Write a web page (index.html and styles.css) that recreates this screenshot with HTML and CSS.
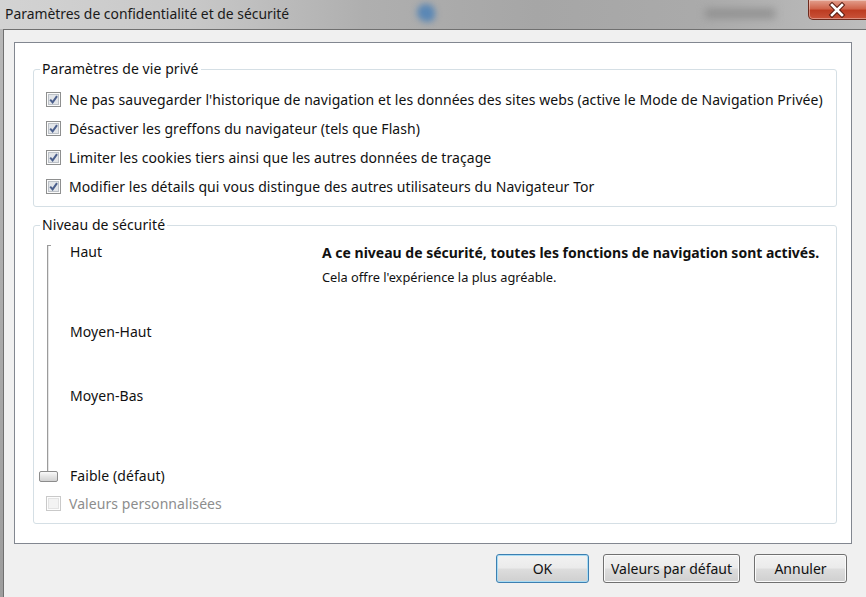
FILE: index.html
```html
<!DOCTYPE html>
<html lang="fr">
<head>
    <meta charset="UTF-8">
    <meta name="viewport" content="width=device-width, initial-scale=1.0">
    <title>Paramètres de confidentialité et de sécurité</title>
    <link rel="stylesheet" href="styles.css">
</head>
<body>
<div class="window">
    <!-- Aero title bar -->
    <div class="titlebar">
        <span class="title">Paramètres de confidentialité et de sécurité</span>
        <span class="glass-bird"></span>
        <span class="glass-text"></span>
        <button type="button" class="close" aria-label="Fermer">
            <svg width="22" height="16" viewBox="0 0 22 16">
                <path d="M6 3l10 10M16 3L6 13" stroke="#5b1d12" stroke-width="4.6" stroke-linecap="square" fill="none"/>
                <path d="M6 3l10 10M16 3L6 13" stroke="#fff" stroke-width="2.6" stroke-linecap="square" fill="none"/>
            </svg>
        </button>
    </div>

    <div class="frame">
        <div class="panel">
            <fieldset class="group privacy">
                <legend>Paramètres de vie privé</legend>
                <label class="check">
                    <svg class="box" viewBox="0 0 15 15"><rect x=".5" y=".5" width="14" height="14" fill="#fbfbfb" stroke="#8e8f8f"/><rect x="2.5" y="2.5" width="10" height="10" fill="#e2e5e9" stroke="#bcc1c7"/><path d="M4.2 7.6l2.4 2.8L11 4.2" stroke="#4b5f8c" stroke-width="2" fill="none"/></svg>
                    Ne pas sauvegarder l'historique de navigation et les données des sites webs (active le Mode de Navigation Privée)
                </label>
                <label class="check">
                    <svg class="box" viewBox="0 0 15 15"><rect x=".5" y=".5" width="14" height="14" fill="#fbfbfb" stroke="#8e8f8f"/><rect x="2.5" y="2.5" width="10" height="10" fill="#e2e5e9" stroke="#bcc1c7"/><path d="M4.2 7.6l2.4 2.8L11 4.2" stroke="#4b5f8c" stroke-width="2" fill="none"/></svg>
                    Désactiver les greffons du navigateur (tels que Flash)
                </label>
                <label class="check">
                    <svg class="box" viewBox="0 0 15 15"><rect x=".5" y=".5" width="14" height="14" fill="#fbfbfb" stroke="#8e8f8f"/><rect x="2.5" y="2.5" width="10" height="10" fill="#e2e5e9" stroke="#bcc1c7"/><path d="M4.2 7.6l2.4 2.8L11 4.2" stroke="#4b5f8c" stroke-width="2" fill="none"/></svg>
                    Limiter les cookies tiers ainsi que les autres données de traçage
                </label>
                <label class="check">
                    <svg class="box" viewBox="0 0 15 15"><rect x=".5" y=".5" width="14" height="14" fill="#fbfbfb" stroke="#8e8f8f"/><rect x="2.5" y="2.5" width="10" height="10" fill="#e2e5e9" stroke="#bcc1c7"/><path d="M4.2 7.6l2.4 2.8L11 4.2" stroke="#4b5f8c" stroke-width="2" fill="none"/></svg>
                    Modifier les détails qui vous distingue des autres utilisateurs du Navigateur Tor
                </label>
            </fieldset>

            <fieldset class="group security">
                <legend>Niveau de sécurité</legend>
                <div class="levels">
                    <div class="slider">
                        <div class="track">
                            <span class="thumb"></span>
                        </div>
                        <ul class="marks">
                            <li>Haut</li>
                            <li>Moyen-Haut</li>
                            <li>Moyen-Bas</li>
                            <li>Faible (défaut)</li>
                        </ul>
                    </div>
                    <div class="desc">
                        <p class="desc-title">A ce niveau de sécurité, toutes les fonctions de navigation sont activés.</p>
                        <p class="desc-text">Cela offre l'expérience la plus agréable.</p>
                    </div>
                </div>
                <label class="check disabled">
                    <svg class="box" viewBox="0 0 15 15"><rect x=".5" y=".5" width="14" height="14" fill="#fdfdfd" stroke="#c9c9c9"/><rect x="2.5" y="2.5" width="10" height="10" fill="#f3f3f3" stroke="#e3e3e3"/></svg>
                    Valeurs personnalisées
                </label>
            </fieldset>
        </div>

        <div class="buttons">
            <button type="button" class="btn default">OK</button>
            <button type="button" class="btn wide">Valeurs par défaut</button>
            <button type="button" class="btn">Annuler</button>
        </div>
    </div>
</div>
</body>
</html>
```

FILE: styles.css
```css
body {
    margin: 0;
    width: 866px;
    height: 597px;
    overflow: hidden;
    font-family: "Noto Sans", "Open Sans", sans-serif;
    font-size: 14px;
    color: #111;
}
.window {
    height: 597px;
    display: flex;
    flex-direction: column;
    background: linear-gradient(180deg, #b9b9b9, #9d9d9d);
}

/* title bar */
.titlebar {
    position: relative;
    height: 29px;
    flex-shrink: 0;
    background: linear-gradient(90deg, #d3d3d3 0%, #c8c8c8 22%, #afafaf 42%, #a6a6a6 62%, #aaaaaa 80%, #bdbdbd 100%);
}
.title {
    display: block;
    padding-left: 5px;
    line-height: 27px;
    font-size: 13.9px;
    color: #1a1a1a;
}
.glass-bird {
    position: absolute;
    left: 417px;
    top: 4px;
    width: 18px;
    height: 18px;
    border-radius: 50% 50% 40% 60%;
    background: #5a87b5;
    filter: blur(3px);
}
.glass-text {
    position: absolute;
    left: 705px;
    top: 9px;
    width: 70px;
    height: 9px;
    background: #8e8e8e;
    filter: blur(4px);
}
.close {
    position: absolute;
    right: -4px;
    top: 0;
    width: 62px;
    height: 20px;
    padding: 0 4px 0 0;
    border: 1px solid #6d2a1d;
    border-top: none;
    border-radius: 0 0 5px 5px;
    background: linear-gradient(180deg, #e3a08e 0%, #d0654c 45%, #bd3c22 55%, #c9533a 100%);
    box-shadow: inset 0 0 0 1px rgba(255, 255, 255, 0.35);
    display: flex;
    align-items: center;
    justify-content: center;
}

/* window body */
.frame {
    flex: 1;
    margin-left: 3px;
    border-left: 1px solid #707070;
    border-top: 1px solid #707070;
    background: #f0f0f0;
    padding: 12px 0 0 10px;
}
.panel {
    box-sizing: border-box;
    width: 838px;
    height: 502px;
    background: #fff;
    border: 1px solid #828790;
    padding: 17px 0 0 18px;
    letter-spacing: 0.07px;
}
.group {
    box-sizing: border-box;
    width: 804px;
    margin: 0;
    border: 1px solid #d5dfe5;
    border-radius: 3px;
    padding: 7px 0 5px 12px;
}
.group legend {
    padding: 0 2px;
    margin-left: -6px;
    line-height: 18px;
}
.security {
    margin-top: 9px;
    padding: 7px 0 5px 5px;
}
.security legend {
    margin-left: 1px;
}

.check {
    display: flex;
    align-items: center;
    height: 29px;
}
.box {
    width: 15px;
    height: 15px;
    margin-right: 8px;
    flex-shrink: 0;
}
.check.disabled {
    margin-top: 4px;
    margin-left: 7px;
    color: #8d8d8d;
}

/* security slider */
.levels {
    display: flex;
}
.slider {
    display: flex;
    width: 283px;
    flex-shrink: 0;
}
.track {
    position: relative;
    width: 31px;
    height: 244px;
}
.track::before {
    content: "";
    position: absolute;
    left: 8px;
    top: 4px;
    width: 1px;
    height: 228px;
    background: #9b9b9b;
    box-shadow: 1px 0 0 #e6e6e6;
}
.track::after {
    content: "";
    position: absolute;
    left: 8px;
    top: 4px;
    width: 4px;
    height: 1px;
    background: #9b9b9b;
}
.thumb {
    position: absolute;
    left: 0;
    top: 230px;
    box-sizing: border-box;
    width: 19px;
    height: 11px;
    border: 1px solid #8c8c8c;
    border-radius: 2px;
    background: linear-gradient(180deg, #fafafa, #e4e4e4 50%, #d2d2d2);
}
.marks {
    list-style: none;
    margin: 0;
    padding: 0;
    display: grid;
    grid-template-rows: 80px 64px 80px 20px;
}
.marks li {
    line-height: 21px;
}
.desc {
    padding-top: 2px;
    letter-spacing: 0;
}
.desc p {
    margin: 0;
}
.desc-title {
    font-weight: bold;
    line-height: 20px;
}
.desc-text {
    margin-top: 5px !important;
    font-size: 12.8px;
    line-height: 18px;
}

/* dialog buttons */
.buttons {
    display: flex;
    justify-content: flex-end;
    gap: 14px;
    width: 833px;
    margin-top: 10px;
}
.btn {
    box-sizing: border-box;
    width: 93px;
    height: 29px;
    padding: 0;
    font-family: inherit;
    font-size: 14px;
    color: #111;
    border: 1px solid #707070;
    border-radius: 3px;
    background: linear-gradient(180deg, #f2f2f2 0%, #ebebeb 48%, #dddddd 52%, #cfcfcf 100%);
    box-shadow: inset 0 0 0 1px #fbfbfb;
}
.btn.wide {
    width: 137px;
}
.btn.default {
    border-color: #3c7fb1;
    box-shadow: inset 0 0 0 1px #a9dcf4;
}
```
